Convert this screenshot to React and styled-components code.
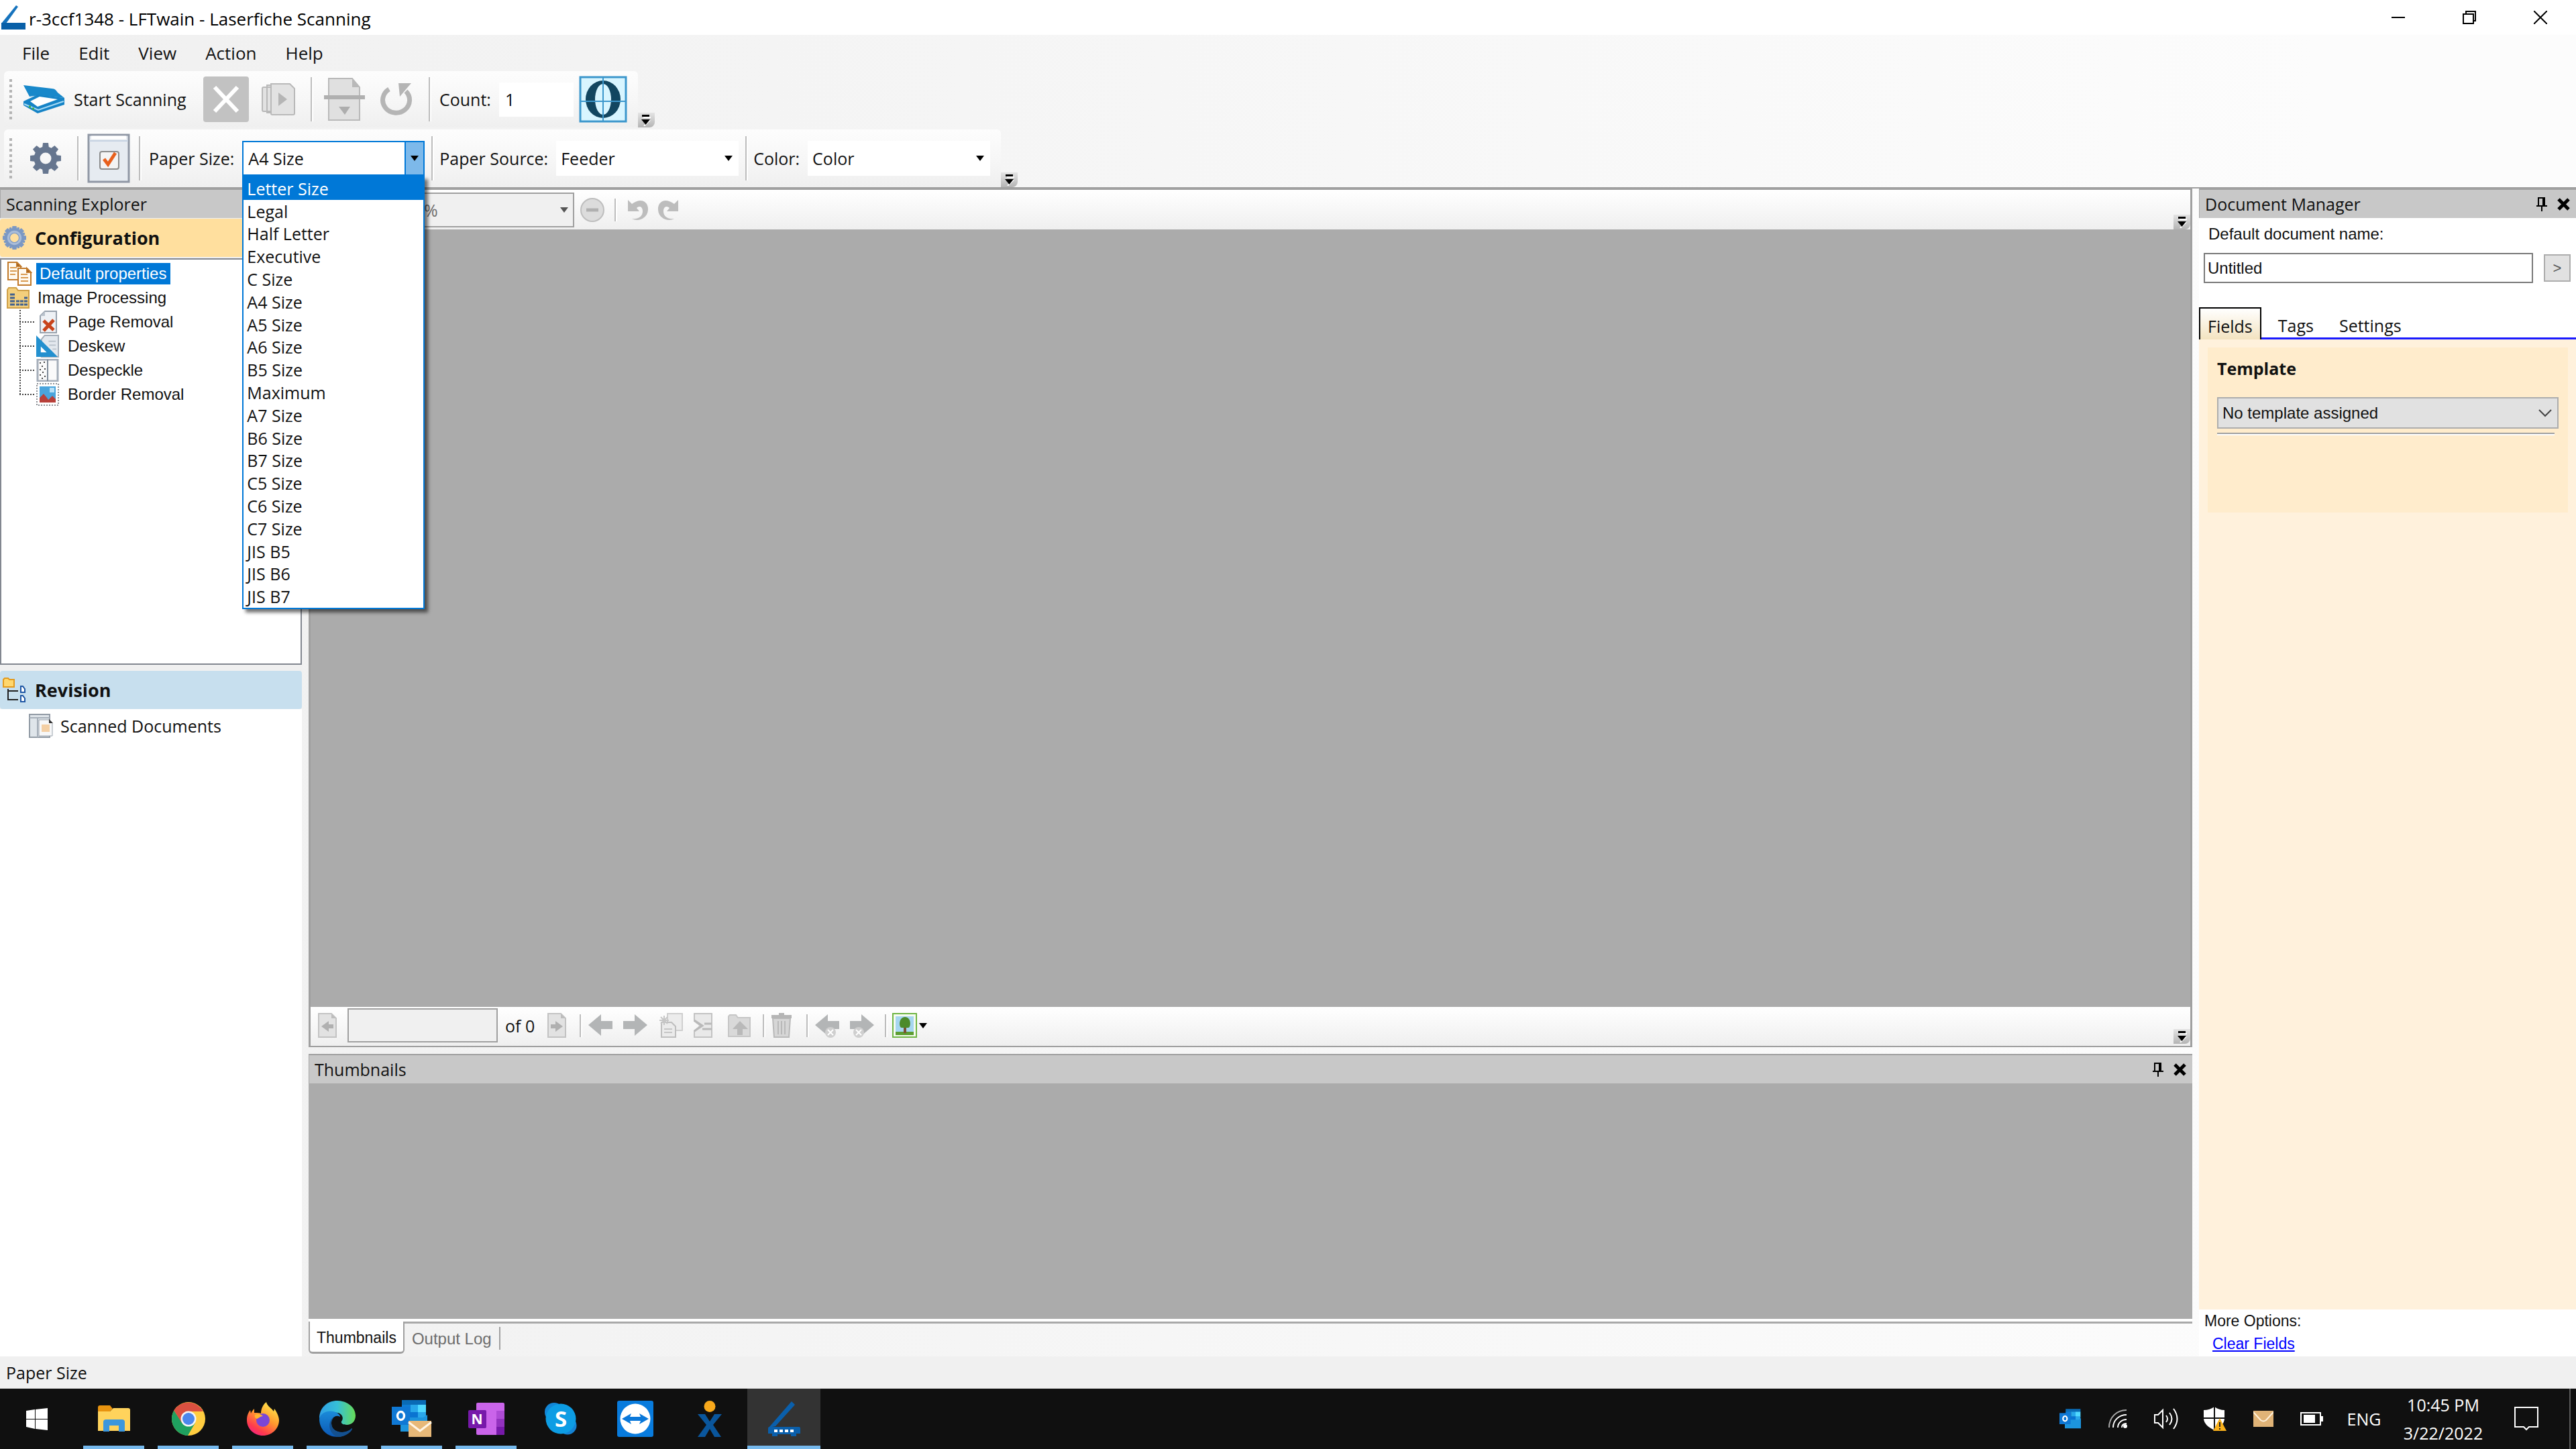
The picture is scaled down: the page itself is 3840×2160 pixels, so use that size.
import React, { useState } from 'react';
import styled, { createGlobalStyle, css } from 'styled-components';

const UI_FONT = '"Open Sans", "Noto Sans", sans-serif';
const CLASSIC_FONT = '"Liberation Sans", Arial, sans-serif';

const GlobalStyle = createGlobalStyle`
  *, *::before, *::after {
    box-sizing: border-box;
  }

  body {
    margin: 0;
    font-family: ${UI_FONT};
    font-size: 25px;
    line-height: 34px;
    color: #111;
  }

  button, input, select {
    margin: 0;
    padding: 0;
    border: none;
    border-radius: 0;
    background: none;
    color: inherit;
    font: inherit;
  }

  svg {
    display: block;
    flex: none;
  }

  ul {
    margin: 0;
    padding: 0;
    list-style: none;
  }
`;

const Window = styled.div`
  display: flex;
  flex-direction: column;
  height: 100vh;
  background: linear-gradient(90deg, #f0f0f0, #fcfcfc 90%);
`;

/* ---------- title bar and menu ---------- */

const TitleBar = styled.header`
  display: flex;
  align-items: center;
  height: 52px;
  padding-left: 2px;
  background: #fff;
  color: #000;
`;

const Title = styled.h1`
  flex: 1;
  margin: 0 0 0 5px;
  padding-top: 4px;
  font-size: 26px;
  font-weight: 400;
`;

const WindowButton = styled.button`
  display: flex;
  align-items: center;
  justify-content: center;
  width: 106px;
  height: 52px;
`;

const MenuBar = styled.nav`
  display: flex;
  align-items: center;
  height: 54px;
  padding-left: 12px;
`;

const MenuButton = styled.button`
  height: 46px;
  padding: 0 22px 0 21px;
  font-size: 26px;
`;

/* ---------- toolbars ---------- */

const ToolbarRow = styled.div`
  display: flex;
  margin: 0 0 3px 6px;
`;

const Toolbar = styled.div`
  display: flex;
  align-items: center;
  gap: 10px;
  height: 84px;
  padding: 0 18px 0 8px;
  border-radius: 6px 6px 0 0;
  background: linear-gradient(#fdfdfd, #f7f7f7 50%, #efefef);
`;

const SettingsToolbar = styled(Toolbar)`
  height: 86px;
  padding-right: 16px;
`;

const Docks = styled.div`
  border-bottom: 2px solid #a0a0a0;

  > :last-child {
    margin-bottom: 0;
  }
`;

const Grip = styled.span`
  width: 4px;
  height: 60px;
  margin-right: 6px;
  background: repeating-linear-gradient(#b4b4b4 0 4px, transparent 4px 8px);
`;

const Separator = styled.span`
  flex: none;
  width: 2px;
  height: ${props => props.$short ? '34px' : '66px'};
  margin: ${props => props.$margin || '0 4px'};
  background: #bdbdbd;
  box-shadow: 2px 0 0 #fff;
`;

const ToolButton = styled.button`
  display: flex;
  flex: none;
  align-items: center;
  justify-content: center;
  width: ${props => props.$width || '68px'};
  height: 68px;
`;

const StartButton = styled(ToolButton)`
  justify-content: flex-start;
  gap: 12px;
  width: 259px;
`;

const StopButton = styled(ToolButton)`
  border-radius: 4px;
  background: #c2c2c2;
`;

const CountLabel = styled.label`
  display: flex;
  align-items: center;
  gap: 12px;
`;

const CountInput = styled.input`
  width: 111px;
  height: 51px;
  padding-left: 9px;
  background: #fff;
`;

const Field = styled.div`
  position: relative;
  display: flex;
  align-items: center;
  gap: 12px;
`;

const Combo = styled.span`
  position: relative;
  display: flex;
  align-items: center;

  select {
    width: ${props => props.$width || '272px'};
    height: 52px;
    padding-left: 7px;
    appearance: none;
    background: #fff;
    opacity: 1;
    ${props => props.$active && css`
      border: 2px solid #0078d7;
      background: linear-gradient(90deg, transparent 240px, #0078d7 240px 242px, #7db9ea 242px), #fff;
    `}
    ${props => props.$disabled && css`
      border: 2px solid #a0a0a0;
      background: #f0f0f0;
      color: #6d6d6d;
    `}
  }

  svg {
    position: absolute;
    right: 9px;
    pointer-events: none;
  }
`;

const SizeList = styled.ul`
  position: absolute;
  z-index: 2;
  top: 100%;
  right: 0;
  display: flex;
  flex-direction: column;
  width: 272px;
  height: 646px;
  border: 2px solid #0078d7;
  background: #fff;
  box-shadow: 5px 5px 5px rgba(0, 0, 0, 0.55);
`;

const SizeOption = styled.li`
  display: flex;
  flex: 1;
  align-items: center;
  padding-left: 5px;
  line-height: 32px;
  ${props => props.$selected && css`
    background: #0078d7;
    color: #fff;
  `}
`;

const OverflowButton = styled.button`
  display: flex;
  align-items: center;
  align-self: flex-end;
  justify-content: center;
  width: 25px;
  height: 22px;
  margin-left: ${props => props.$push ? 'auto' : '0'};
  background: linear-gradient(#e4e4e4, #b4b4b4);
  border-radius: 0 0 8px 0;
`;

/* ---------- panels ---------- */

const Workspace = styled.main`
  display: grid;
  flex: 1;
  grid-template-columns: 450px minmax(0, 1fr) 562px;
  gap: 10px;
  min-height: 0;
`;

const Column = styled.section`
  display: flex;
  flex-direction: column;
  min-width: 0;
  min-height: 0;
`;

const WhiteColumn = styled(Column)`
  background: #fff;
`;

const PanelHeader = styled.div`
  display: flex;
  flex: none;
  align-items: center;
  gap: 15px;
  height: 44px;
  padding: 0 9px 0 8px;
  border-top: 2px solid #a0a0a0;
  border-left: 1px solid #a8a8a8;
  background: #c8c8c8;

  h2 {
    flex: 1;
    margin: 0;
    font-size: 25px;
    font-weight: 400;
  }
`;

const GroupHeader = styled.h3`
  display: flex;
  flex: none;
  align-items: center;
  gap: 13px;
  height: 57px;
  margin: 0;
  padding-left: 4px;
  border-radius: 4px;
  background: ${props => props.$color};
  font-size: 27px;
  font-weight: 700;
`;

const ConfigTree = styled.ul`
  height: 606px;
  margin: 2px 0 9px;
  padding: 3px 8px;
  border: 2px solid #828790;
  background: #fff;
  font-family: ${CLASSIC_FONT};
  font-size: 24px;
`;

const ExplorerGroup = styled.div`
  padding-top: 1px;
  background: #f0f0f0;
`;

const TreeItem = styled.li`
  display: flex;
  align-items: center;
  gap: 6px;
  height: 36px;
`;

const TreeLabel = styled.span`
  padding: 0 6px 0 5px;
  line-height: 32px;
  white-space: nowrap;
  ${props => props.$selected && css`
    background: #0078d7;
    color: #fff;
  `}
`;

const TreeBranch = styled.ul`
  margin-left: 19px;

  li {
    gap: 8px;
    background:
      repeating-linear-gradient(90deg, #444 0 2px, transparent 2px 4px) 0 50% / 24px 2px no-repeat,
      repeating-linear-gradient(#444 0 2px, transparent 2px 4px) 0 0 / 2px 100% no-repeat;
  }

  li:last-child {
    background-size: 24px 2px, 2px 50%;
  }

  svg {
    margin-left: 25px;
  }
`;

const RevisionItem = styled.div`
  display: flex;
  align-items: center;
  gap: 11px;
  height: 50px;
  padding-left: 43px;
`;

/* ---------- viewer ---------- */

const Viewer = styled.div`
  display: flex;
  flex: 1;
  flex-direction: column;
  min-height: 0;
  margin-bottom: 10px;
  border: solid #a0a0a0;
  border-width: 2px 3px;
  background: #f4f4f4;
`;

const ViewerBar = styled.div`
  display: flex;
  flex: none;
  align-items: center;
  gap: 9px;
  height: 59px;
  padding-left: 8px;
  background: linear-gradient(#fff, #efefef);
`;

const NavBar = styled(ViewerBar)`
  gap: 0;
  height: 58px;
  padding: 0 0 3px 11px;
`;

const Canvas = styled.div`
  flex: 1;
  min-height: 0;
  background: #ababab;
`;

const SmallButton = styled.button`
  display: flex;
  flex: none;
  align-items: center;
  justify-content: center;
  width: 36px;
  height: 40px;
`;

const NavButton = styled(SmallButton)`
  justify-content: flex-start;
  width: ${props => props.$width || '52px'};
`;

const PageInput = styled.input`
  width: 224px;
  height: 51px;
  padding: 0 8px;
  border: 2px solid #a0a0a0;
  background: #f0f0f0;
`;

const PageTotal = styled.span`
  width: 74px;
  padding-left: 11px;
`;

const ThumbnailPanel = styled.div`
  display: flex;
  flex-direction: column;
  height: 451px;
`;

const TabStrip = styled.div`
  display: flex;
  height: 56px;
  border-top: 4px solid #fff;
  font-family: ${CLASSIC_FONT};
  font-size: 23px;
`;

const StripTab = styled.button`
  height: 48px;
  padding: 0 11px;
  border-top: 3px solid #a9a9a9;
  color: #6d6d6d;
  font-size: 24px;
  ${props => props.$active && css`
    padding: 3px 10px 0;
    border: solid #a0a0a0;
    border-width: 0 2px 3px;
    border-radius: 0 0 6px 6px;
    background: #fff;
    color: #111;
    font-size: 23px;
  `}
`;

const StripRest = styled.span`
  flex: 1;
  border-top: 3px solid #a9a9a9;

  &::before {
    content: '';
    display: block;
    width: 2px;
    height: 34px;
    margin-top: 5px;
    background: #a0a0a0;
  }
`;

/* ---------- document manager ---------- */

const NameForm = styled.div`
  display: grid;
  flex: none;
  grid-template-columns: minmax(0, 1fr) 40px;
  align-items: center;
  column-gap: 16px;
  padding: 8px 8px 36px 7px;
  font-family: ${CLASSIC_FONT};
  font-size: 24px;

  label {
    grid-column: 1 / -1;
    margin-bottom: 12px;
    padding-left: 7px;
    line-height: 32px;
  }

  input {
    height: 45px;
    padding-left: 4px;
    border: 2px solid #7a7a7a;
    background: #fff;
  }

  button {
    height: 41px;
    border: 2px solid #adadad;
    background: #e1e1e1;
    color: #555;
    font-size: 22px;
  }
`;

const Tabs = styled.div`
  display: flex;
  flex: none;
  height: 48px;
  background: linear-gradient(transparent 45px, #1a1aff 45px);
`;

const Tab = styled.button`
  padding: 6px 19px 0;
  ${props => props.$active && css`
    margin-right: 6px;
    padding: 6px 11px 0;
    border: 2px solid #000;
    border-bottom: none;
    background: linear-gradient(#fff, #f3e3c0);
  `}
`;

const FieldsPane = styled.div`
  flex: 1;
  padding: 12px 12px 0 13px;
  background: #fff1dc;
`;

const TemplateCard = styled.div`
  height: 246px;
  padding: 14px;
  background: #ffeccc;

  h3 {
    margin: 0 0 26px;
    font-size: 25px;
    font-weight: 700;
  }
`;

const TemplateSelect = styled.span`
  position: relative;
  display: flex;
  align-items: center;
  margin-bottom: 6px;
  font-family: ${CLASSIC_FONT};
  font-size: 24px;

  select {
    width: 100%;
    height: 47px;
    padding-left: 6px;
    appearance: none;
    border: 2px solid #adadad;
    background: #e1e1e1;
  }

  svg {
    position: absolute;
    right: 10px;
    pointer-events: none;
  }
`;

const Rule = styled.hr`
  height: 4px;
  margin: 0 6px 0 0;
  border: none;
  border-top: 2px solid #a0a0a0;
  background: #fff;
`;

const MoreOptions = styled.div`
  flex: none;
  height: 70px;
  padding-left: 8px;
  font-family: ${CLASSIC_FONT};
  font-size: 23px;

  a {
    display: block;
    margin-left: 12px;
    color: #00f;
  }
`;

/* ---------- status bar and taskbar ---------- */

const StatusBar = styled.footer`
  display: flex;
  flex: none;
  align-items: center;
  height: 48px;
  padding-left: 9px;
  background: #f0f0f0;
`;

const Taskbar = styled.footer`
  display: flex;
  flex: none;
  height: 90px;
  background: #101010;
  color: #fff;
`;

const AppButton = styled.button`
  display: flex;
  align-items: center;
  justify-content: center;
  width: 109px;
  height: 90px;
  margin-right: 2px;
  background: ${props => props.$active ? '#333' : 'transparent'};
  ${props => (props.$running || props.$active) && css`
    background-image: linear-gradient(#76b9ed, #76b9ed);
    background-position: 50% 100%;
    background-repeat: no-repeat;
    background-size: ${props.$active ? '100%' : '91px'} 5px;
  `}

  &:first-child {
    margin-right: 6px;
  }
`;

const Tray = styled.div`
  display: flex;
  align-items: center;
  margin-left: auto;
`;

const TrayButton = styled.button`
  display: flex;
  align-items: center;
  justify-content: center;
  width: ${props => props.$width || '72px'};
  height: 90px;
`;

const Clock = styled.button`
  width: 140px;
  padding-left: 12px;
  line-height: 42px;
  text-align: center;
`;

const ShowDesktop = styled.button`
  width: 10px;
  margin-left: 4px;
  border-left: 2px solid #5a5a5a;
`;

/* ---------- icons ---------- */

const Caret = ({ color = '#000' }) => (
  <svg width="12" height="8" viewBox="0 0 12 8"><path d="M0 0h12L6 8z" fill={color} /></svg>
);

const OverflowIcon = () => (
  <svg width="14" height="17" viewBox="0 0 14 17">
    <path d="M3 4h11M4 17l9-9" stroke="#fff" strokeWidth="2" />
    <path d="M1 1.5h11" stroke="#000" strokeWidth="3" />
    <path d="M0 7h13l-6.500 8z" fill="#000" />
  </svg>
);

const PinIcon = () => (
  <svg width="16" height="22" viewBox="0 0 16 22" fill="none" stroke="#000" strokeWidth="2">
    <path d="M3 13V2h9v11M0 14h16M8 14v8" />
    <path d="M11 2v11" strokeWidth="4" />
  </svg>
);

const PanelCloseIcon = () => (
  <svg width="19" height="19" viewBox="0 0 19 19"><path d="M2 2l15 15M17 2L2 17" stroke="#000" strokeWidth="5" /></svg>
);

const LogoIcon = () => (
  <svg width="36" height="38" viewBox="0 0 36 38">
    <path d="M22 1l3 2L7 28H0z" fill="#1673bd" />
    <path d="M0 27h36v10H0z" fill="#0960a8" />
  </svg>
);

const ScannerIcon = () => (
  <svg width="64" height="44" viewBox="0 0 64 44">
    <path d="M1 1l42 5c5 0 7 3 9 6l10 8-38-4-14 2z" fill="#1888ca" />
    <path d="M1 25l21-10 40 5v10L22 43 1 31z" fill="#1583c6" />
    <path d="M11 25l14-7 27 4-30 11z" fill="#fff" />
    <path d="M2 29l21 9 38-13" fill="none" stroke="#a9dcf6" strokeWidth="2" />
    <path d="M9 33h3M14 36h3" stroke="#3fae4b" strokeWidth="3" />
  </svg>
);

const StopIcon = () => (
  <svg width="40" height="42" viewBox="0 0 40 42"><path d="M3 3l34 36M37 3L3 39" stroke="#fff" strokeWidth="6" /></svg>
);

const PagesIcon = () => (
  <svg width="50" height="48" viewBox="0 0 50 48" fill="#e2e2e2" stroke="#b9b9b9" strokeWidth="2">
    <path d="M13 6H3q-2 0-2 2v32q0 2 2 2h10M17 3H8v41h9" />
    <path d="M14 1h28l7 7v37q0 2-2 2H16q-2 0-2-2z" />
    <path d="M25 14v20l13-10z" fill="#b5b5b5" stroke="none" />
  </svg>
);

const SplitPageIcon = () => (
  <svg width="61" height="64" viewBox="0 0 61 64">
    <path d="M7 1h35l11 13v49H7z" fill="#e0e0e0" stroke="#b9b9b9" strokeWidth="2" />
    <path d="M42 1v13h11z" fill="#b9b9b9" />
    <path d="M0 26h61v6H0z" fill="#b0b0b0" />
    <path d="M22 43h17l-8 12z" fill="#adadad" />
  </svg>
);

const RotateIcon = () => (
  <svg width="48" height="50" viewBox="0 0 48 50">
    <path d="M13 10a20 19 0 1 0 25 3" fill="none" stroke="#b5b5b5" strokeWidth="7" />
    <path d="M27 1h19l-6 7-11 13z" fill="#b5b5b5" />
  </svg>
);

const ZeroIcon = () => (
  <svg width="72" height="70" viewBox="0 0 72 70">
    <rect x="2" y="2" width="68" height="66" fill="#d8f5ff" stroke="#3c97cc" strokeWidth="3" />
    <ellipse cx="36" cy="35" rx="26" ry="28" fill="#124660" />
    <ellipse cx="36" cy="35" rx="12" ry="23" fill="#d8f5ff" />
    <path d="M36 2v66M2 38h68" stroke="#3c97cc" strokeWidth="2" />
  </svg>
);

const teeth = [0, 45, 90, 135, 180, 225, 270, 315];

const Gear = ({ size, color, light }) => (
  <svg width={size} height={size} viewBox="0 0 46 46">
    {teeth.map(angle => (
      <path key={angle} d="M18 8L19 0h8l1 8z" fill={color} transform={`rotate(${angle} 23 23)`} />
    ))}
    {light && teeth.map(angle => (
      <path key={angle} d="M20 8l1-7h4l1 7z" fill={color} transform={`rotate(${angle + 22} 23 23)`} />
    ))}
    <circle cx="23" cy="23" r="13" fill="none" stroke={color} strokeWidth="9" />
    {light && <circle cx="23" cy="23" r="12" fill="none" stroke="#a9bcd8" strokeWidth="4" />}
  </svg>
);

const OptionsIcon = () => (
  <svg width="64" height="74" viewBox="0 0 64 74">
    <path d="M2 2h60v70H2z" fill="#e6ebf1" stroke="#9098a5" strokeWidth="3" />
    <path d="M3 11h58" stroke="#c5d2e2" strokeWidth="2" />
    <path d="M6 6h52" stroke="#fff" strokeWidth="5" />
    <rect x="19" y="27" width="28" height="26" rx="3" fill="#f4f4f4" stroke="#8b8b8b" strokeWidth="2" />
    <path d="M25 38l6 8 11-17" fill="none" stroke="#e8601c" strokeWidth="5" />
  </svg>
);

const PropertiesIcon = () => (
  <svg width="38" height="36" viewBox="0 0 38 36" fill="#fffaf0" stroke="#c17a2c" strokeWidth="2">
    <path d="M2 1h13l6 6v20H2z" />
    <path d="M5 9h10M5 14h10M5 19h8" stroke="#d99b50" />
    <path d="M17 10h13l6 6v19H17z" />
    <path d="M21 19h10M21 24h11M21 29h11" stroke="#d99b50" />
    <path d="M15 1v6h6zM30 10v6h6z" fill="#8b4a12" />
  </svg>
);

const ProcessingIcon = () => (
  <svg width="35" height="32" viewBox="0 0 35 32">
    <path d="M1 4l2-3h11l3 4h16v26H1z" fill="#f3cf7c" stroke="#cfa049" strokeWidth="2" />
    <path d="M5 11h7M5 16h7M5 21h7M5 26h7M14 21h5M14 26h5M20 21h5M20 26h5M26 16h5M26 21h5M26 26h5" stroke="#41618f" strokeWidth="3" />
  </svg>
);

const PageRemovalIcon = () => (
  <svg width="34" height="34" viewBox="0 0 34 34">
    <path d="M13 1h17v32H6V8z" fill="#eef1f5" stroke="#97a1ad" strokeWidth="2" />
    <path d="M13 1v7H6z" fill="#b9c2cc" />
    <path d="M11 15l15 14M26 14L11 30" stroke="#c8431b" strokeWidth="5" />
  </svg>
);

const DeskewIcon = () => (
  <svg width="34" height="34" viewBox="0 0 35 35">
    <path d="M13 1h21v33H8V7z" fill="#e3e8ee" stroke="#a5aeb9" strokeWidth="2" />
    <path d="M19 10h11M20 16h10M25 22h6" stroke="#bcc4cd" strokeWidth="2" />
    <path d="M0 1l33 33H0z" fill="#2390cf" />
    <path d="M7 18v9h9z" fill="#fff" />
  </svg>
);

const DespeckleIcon = () => (
  <svg width="34" height="34" viewBox="0 0 34 34">
    <path d="M2 1h30v32H2z" fill="#fafafa" stroke="#a5aeb9" strokeWidth="3" />
    <path d="M17 1v32" stroke="#7f8b99" strokeWidth="2" />
    <path d="M5 6h2M11 5h2M8 11h2M5 16h2M12 15h2M9 20h2M5 24h2M12 26h2M8 29h2" stroke="#444" strokeWidth="2" />
  </svg>
);

const BorderRemovalIcon = () => (
  <svg width="34" height="34" viewBox="0 0 34 34">
    <rect x="1" y="1" width="32" height="32" fill="none" stroke="#8b8f95" strokeWidth="2" strokeDasharray="2 2" />
    <path d="M5 5h24v24H5z" fill="#4aa5dd" />
    <path d="M20 7h7v7h-7z" fill="#b7e0f7" />
    <path d="M5 29v-7l6-6 5 6 2 3 6-6 5 5v5z" fill="#b8403a" />
  </svg>
);

const RevisionIcon = () => (
  <svg width="35" height="37" viewBox="0 0 35 37">
    <path d="M1 3l2-2h5l2 2h7v11H1z" fill="#ffd76d" stroke="#e39a1d" strokeWidth="2" />
    <path d="M8 17v16h15M8 20h15" fill="none" stroke="#222" strokeWidth="2" />
    <path d="M27 13h3l3 4v5h-6zM27 27h3l3 4v5h-6z" fill="#fff" stroke="#1d55a3" strokeWidth="2" />
  </svg>
);

const ScannedIcon = () => (
  <svg width="36" height="36" viewBox="0 0 36 36">
    <path d="M1 1h30v34H1z" fill="#dfe5ea" stroke="#929ba5" strokeWidth="2" />
    <path d="M1 6h30M13 6v29" stroke="#a7b0ba" strokeWidth="2" />
    <path d="M15 9h16l4 5v19H15z" fill="#f6f7f8" stroke="#9aa3ad" strokeWidth="1" />
    <path d="M30 8v6h6z" fill="#333" />
    <path d="M19 16h12v11H19z" fill="#f3cfa4" />
  </svg>
);

const MinusIcon = () => (
  <svg width="36" height="36" viewBox="0 0 36 36">
    <circle cx="18" cy="18" r="17" fill="#dcdcdc" stroke="#bebebe" strokeWidth="2" />
    <path d="M9 18h18" stroke="#b0b0b0" strokeWidth="5" />
  </svg>
);

const UndoIcon = () => (
  <svg width="32" height="32" viewBox="0 0 32 32">
    <path d="M1 1l6 6C22-4 32 5 31 16 30 29 16 34 7 29c9 1 16-3 16-11 0-7-5-9-9-5l4 5H1z" fill="#bdbdbd" />
  </svg>
);

const RedoIcon = () => (
  <svg width="32" height="32" viewBox="0 0 32 32">
    <path d="M31 1l-6 6C10-4 0 5 1 16c1 13 15 18 24 13-9 1-16-3-16-11 0-7 5-9 9-5l-4 5h17z" fill="#bdbdbd" />
  </svg>
);

const PageArrowIcon = ({ flip }) => (
  <svg width="28" height="37" viewBox="0 0 28 37">
    <path d="M1 1h19l7 7v28H1z" fill="#e2e2e2" stroke="#c3c3c3" strokeWidth="2" />
    <path d="M20 1v7h7z" fill="#bdbdbd" />
    <path d="M5 20l11-8v5h7v6h-7v5z" fill="#b0b0b0" transform={flip && 'matrix(-1 0 0 1 28 0)'} />
  </svg>
);

const ArrowIcon = ({ flip, badge }) => (
  <svg width="38" height="38" viewBox="0 0 38 38">
    <path d="M0 18L19 2v10h17v12H19v10z" fill="#b3b5b6" transform={flip && 'matrix(-1 0 0 1 36 0)'} />
    {badge && <circle cx={flip ? 13 : 23} cy="29" r="8" fill="#cfcfcf" />}
    {badge && <path d={flip ? 'M9 25l8 8M17 25l-8 8' : 'M19 25l8 8M27 25l-8 8'} stroke="#fff" strokeWidth="2" />}
  </svg>
);

const NewPageIcon = () => (
  <svg width="37" height="37" viewBox="0 0 37 37">
    <path d="M14 1h22v25H14z" fill="#ececec" stroke="#cfcfcf" strokeWidth="2" />
    <path d="M5 14h15l6 6v16H5z" fill="#ebebeb" stroke="#bebebe" strokeWidth="2" />
    <path d="M9 24h12M9 29h12" stroke="#c6c6c6" strokeWidth="2" />
    <path d="M9 4v14M2 11h14M4 6l10 10M14 6L4 16" stroke="#c6c6c6" strokeWidth="2" />
  </svg>
);

const CutPageIcon = () => (
  <svg width="30" height="37" viewBox="0 0 30 37">
    <path d="M2 1h26v35H2V27l9-8-9-7z" fill="#e9e9e9" stroke="#c3c3c3" strokeWidth="2" />
    <path d="M2 11l12 8L2 27M28 16H17M28 24H14" fill="none" stroke="#b9b9b9" strokeWidth="3" />
  </svg>
);

const UploadFolderIcon = () => (
  <svg width="35" height="37" viewBox="0 0 35 37">
    <path d="M1 5l2-2h9l3 4h18v28H1z" fill="#d9d9d9" stroke="#c6c6c6" strokeWidth="2" />
    <path d="M18 12l12 12h-8v9h-8v-9H7z" fill="#b9b9b9" />
  </svg>
);

const TrashIcon = () => (
  <svg width="30" height="37" viewBox="0 0 30 37">
    <path d="M2 8h26l-2 28H4z" fill="#d6d6d6" stroke="#b9b9b9" strokeWidth="2" />
    <path d="M0 3h30v5H0zM11 0h8v3h-8z" fill="#b5b5b5" />
    <path d="M10 12v20M15 12v20M20 12v20" stroke="#b9b9b9" strokeWidth="2" />
  </svg>
);

const TreeImageIcon = () => (
  <svg width="37" height="37" viewBox="0 0 37 37">
    <rect x="1" y="1" width="35" height="35" fill="#f5fbf0" stroke="#6fb544" strokeWidth="2" />
    <path d="M5 5h27v27H5z" fill="#a6d6f0" />
    <path d="M5 28h27v5H5z" fill="#5d9d32" />
    <path d="M17 20h4v10h-4z" fill="#7b5335" />
    <path d="M19 6c10 0 9 16 5 16H14C9 21 10 6 19 6z" fill="#4c8a2b" />
  </svg>
);

const ChevronIcon = () => (
  <svg width="20" height="13" viewBox="0 0 20 13"><path d="M1 2l9 9 9-9" fill="none" stroke="#444" strokeWidth="2" /></svg>
);

const WindowsIcon = () => (
  <svg width="32" height="33" viewBox="0 0 32 33">
    <path d="M0 4l13-2v14H0zM14 2l18-2v16H14zM0 17h13v14L0 28zM14 17h18v16l-18-2z" fill="#fff" />
  </svg>
);

const FolderAppIcon = () => (
  <svg width="48" height="42" viewBox="0 0 48 42">
    <path d="M0 4q0-3 3-3h15l4 5-4 4H0z" fill="#e8930f" />
    <path d="M0 10h18l5-5h22q3 0 3 3v31H0z" fill="#ffd35c" />
    <path d="M8 40V26q0-4 4-4h24q4 0 4 4v14h-9V31H17v9z" fill="#3c97dd" />
  </svg>
);

const ChromeIcon = () => (
  <svg width="50" height="50" viewBox="0 0 50 50">
    <circle cx="25" cy="25" r="25" fill="#ffcd40" />
    <path d="M25 25L3.350 12.500A25 25 0 0 1 46.650 14H25z" fill="#da5040" />
    <path d="M3.350 12.500A25 25 0 0 0 24 50l11-19-10-3-10 2z" fill="#1fa15f" />
    <path d="M25 14h21.650A25 25 0 0 0 3.350 12.500L15 31z" fill="#da5040" />
    <circle cx="25" cy="25" r="11.500" fill="#f4f4f4" />
    <circle cx="25" cy="25" r="9" fill="#4b87ec" />
  </svg>
);

const FirefoxIcon = () => (
  <svg width="48" height="50" viewBox="0 0 48 50">
    <defs>
      <linearGradient id="fox" x1="0.8" y1="0" x2="0.2" y2="1">
        <stop offset="0" stopColor="#fff04f" />
        <stop offset="0.45" stopColor="#ff9a2e" />
        <stop offset="0.8" stopColor="#ff3a4e" />
        <stop offset="1" stopColor="#f0208a" />
      </linearGradient>
    </defs>
    <path d="M29 0c1 6 8 9 11 14l1-4c5 7 7 13 7 17 0 13-11 23-24 23S0 40 0 27c0-7 2-11 5-15l1 5c1-3 3-5 5-7v6c5 0 8 0 10 1 0-7 3-13 8-17z" fill="url(#fox)" />
    <circle cx="24" cy="27" r="10" fill="#7a46d8" />
    <path d="M12 19c4-2 9-1 12 2-4 0-6 3-9 4-3-1-4-3-3-6z" fill="#ffb52e" />
  </svg>
);

const EdgeIcon = () => (
  <svg width="54" height="54" viewBox="0 0 54 54">
    <defs>
      <linearGradient id="edgeTop" x1="0" y1="0.4" x2="1" y2="0.4">
        <stop offset="0" stopColor="#2f9fe6" />
        <stop offset="0.5" stopColor="#36bfd6" />
        <stop offset="1" stopColor="#67dc56" />
      </linearGradient>
      <linearGradient id="edgeLow" x1="0" y1="0" x2="0" y2="1">
        <stop offset="0" stopColor="#1b8bd9" />
        <stop offset="1" stopColor="#0b58b5" />
      </linearGradient>
    </defs>
    <path d="M0 27C0 10 12 0 27 0s27 10 27 22c0 9-6 14-13 14-6 0-9-2-8-5 4-5 1-12-6-13C14 15 3 19 0 27z" fill="url(#edgeTop)" />
    <path d="M0 27c2-9 12-13 21-11 7 2 10 5 10 8-8-4-13 3-13 10 0 8 7 13 16 13 7 0 11-3 15-6-3 7-12 13-22 13C12 54 0 43 0 27z" fill="url(#edgeLow)" />
    <path d="M22 24c-6 6-5 15 1 20s18 4 26-3c1 3-8 13-22 13-13-5-16-22-5-30z" fill="#14508f" />
  </svg>
);

const OutlookIcon = ({ mail }) => (
  <svg width={mail ? 60 : 32} height={mail ? 56 : 30} viewBox={mail ? '0 0 60 56' : '0 0 52 48'}>
    <path d="M15 0h36v8H15z" fill="#0a6bb5" />
    <path d="M15 7h13v12H15z" fill="#0f7cd4" />
    <path d="M28 7h12v12H28z" fill="#28a8ea" />
    <path d="M39 7h12v12H39z" fill="#50d9ff" />
    <path d="M15 18h25v12H15z" fill="#0a74d1" />
    <path d="M39 18h12v12H39z" fill="#2aa7ea" />
    <path d="M13 26h34l6-4v25H13z" fill="#1c94dd" />
    <path d="M0 10h27v27H0z" fill="#0f78d4" />
    <ellipse cx="13.500" cy="23.500" rx="5" ry="6" fill="none" stroke="#fff" strokeWidth="3.500" />
    {mail && <path d="M25 31h34v24H25z" fill="#e7b878" />}
    {mail && <path d="M25 33l17 13 17-13" fill="none" stroke="#fff5e4" strokeWidth="3" />}
  </svg>
);

const OneNoteIcon = () => (
  <svg width="54" height="48" viewBox="0 0 54 48">
    <path d="M14 0h38q2 0 2 2v44q0 2-2 2H14q-2 0-2-2V2q0-2 2-2z" fill="#ca64ea" />
    <path d="M42 12h12v12H42z" fill="#ae4bd5" />
    <path d="M42 24h12v12H42z" fill="#9332bf" />
    <path d="M42 36h12v10q0 2-2 2H42z" fill="#7719aa" />
    <rect y="11" width="27" height="27" rx="2" fill="#7719aa" />
    <text x="13" y="32" textAnchor="middle" fill="#fff" fontFamily="Open Sans" fontWeight="700" fontSize="21">N</text>
  </svg>
);

const SkypeIcon = () => (
  <svg width="48" height="48" viewBox="0 0 48 48">
    <circle cx="14" cy="14" r="14" fill="#1286d6" />
    <circle cx="34" cy="34" r="13.500" fill="#1583d4" />
    <circle cx="24" cy="24" r="22.500" fill="#0d9de4" />
    <text x="24" y="36" textAnchor="middle" fill="#fff" fontFamily="Open Sans" fontWeight="700" fontSize="33">S</text>
  </svg>
);

const TeamViewerIcon = () => (
  <svg width="54" height="54" viewBox="0 0 54 54">
    <rect width="54" height="54" rx="3" fill="#087bdd" />
    <circle cx="27" cy="27" r="22.500" fill="#fff" />
    <path d="M7 27l14-8-2 5h16l-2-5 14 8-14 8 2-5H19l2 5z" fill="#0a78da" />
  </svg>
);

const PersonIcon = () => (
  <svg width="36" height="54" viewBox="0 0 36 54">
    <circle cx="18" cy="8.500" r="8.500" fill="#f7a81b" />
    <path d="M0 20h11l7 11 7-11h11L23 36l12 18H25l-7-12-7 12H0l13-18z" fill="#0a569c" />
  </svg>
);

const ScanAppIcon = () => (
  <svg width="48" height="52" viewBox="0 0 48 52">
    <path d="M35 0l5 5L11 37l-10 2z" fill="#0a5fab" />
    <path d="M0 40q0-2 2-2h44q2 0 2 2v8h-6v4h-8v-3H14v3H6v-4H0z" fill="#0a5fab" />
    <path d="M9 44h5M17 44h5M25 44h5M33 44h5" stroke="#fff" strokeWidth="4" />
  </svg>
);

const WifiIcon = () => (
  <svg width="30" height="28" viewBox="0 0 30 28" fill="none" stroke="#fff" strokeWidth="2">
    <path d="M1 27C1 12 12 1 27 1" stroke="#aaa" />
    <path d="M7 27C7 16 16 8 27 8M14 27c0-7 6-12 13-12" />
    <path d="M20 27c0-4 3-6 7-6" />
    <circle cx="25" cy="25" r="3" fill="#fff" stroke="none" />
  </svg>
);

const SpeakerIcon = () => (
  <svg width="38" height="34" viewBox="0 0 38 34" fill="none" stroke="#fff" strokeWidth="2">
    <path d="M1 11h5l7-7v26l-7-7H1z" />
    <path d="M18 12q4 5 0 10M23 8q7 9 0 18M29 2q11 15 0 30" />
  </svg>
);

const ShieldIcon = () => (
  <svg width="34" height="36" viewBox="0 0 34 36">
    <path d="M16 0c4 3 9 5 15 5v12c0 9-7 14-15 18C8 31 0 26 0 17V5c6 0 12-2 16-5z" fill="#fff" />
    <path d="M16 0v34M0 17h31" stroke="#101010" strokeWidth="2" />
    <path d="M24 17l10 19H14z" fill="#f8b01b" />
    <path d="M24 23v7M24 32v2" stroke="#222" strokeWidth="2" />
  </svg>
);

const MailIcon = () => (
  <svg width="30" height="24" viewBox="0 0 30 24">
    <path d="M0 0h30v24H0z" fill="#e0b377" />
    <path d="M0 2l11 12q4 3 8 0L30 2" fill="none" stroke="#fff1da" strokeWidth="2" />
  </svg>
);

const BatteryIcon = () => (
  <svg width="34" height="20" viewBox="0 0 34 20">
    <path d="M1 1h29v18H1z" fill="none" stroke="#fff" strokeWidth="2" />
    <path d="M5 4h17v12H5zM31 6h3v8h-3z" fill="#fff" />
  </svg>
);

const ActionCenterIcon = () => (
  <svg width="36" height="36" viewBox="0 0 36 36"><path d="M1 1h34v29H22l-4 4-4-4H1z" fill="none" stroke="#fff" strokeWidth="2" /></svg>
);

/* ---------- data ---------- */

const menus = ['File', 'Edit', 'View', 'Action', 'Help'];

const paperSizes = [
  'Letter Size', 'Legal', 'Half Letter', 'Executive', 'C Size', 'A4 Size', 'A5 Size',
  'A6 Size', 'B5 Size', 'Maximum', 'A7 Size', 'B6 Size', 'B7 Size', 'C5 Size', 'C6 Size',
  'C7 Size', 'JIS B5', 'JIS B6', 'JIS B7',
];

const processingSteps = [
  { name: 'Page Removal', Icon: PageRemovalIcon },
  { name: 'Deskew', Icon: DeskewIcon },
  { name: 'Despeckle', Icon: DespeckleIcon },
  { name: 'Border Removal', Icon: BorderRemovalIcon },
];

const apps = [
  { name: 'Start', icon: <WindowsIcon /> },
  { name: 'File Explorer', icon: <FolderAppIcon />, running: true },
  { name: 'Chrome', icon: <ChromeIcon />, running: true },
  { name: 'Firefox', icon: <FirefoxIcon />, running: true },
  { name: 'Edge', icon: <EdgeIcon />, running: true },
  { name: 'Outlook', icon: <OutlookIcon mail />, running: true },
  { name: 'OneNote', icon: <OneNoteIcon />, running: true },
  { name: 'Skype', icon: <SkypeIcon /> },
  { name: 'TeamViewer', icon: <TeamViewerIcon /> },
  { name: 'Assistant', icon: <PersonIcon /> },
  { name: 'Laserfiche Scanning', icon: <ScanAppIcon />, active: true },
];

const PanelActions = () => (
  <>
    <button aria-label="Pin"><PinIcon /></button>
    <button aria-label="Close panel"><PanelCloseIcon /></button>
  </>
);

const App = () => {
  const [paperSize, setPaperSize] = useState('A4 Size');
  const [hovered, setHovered] = useState('Letter Size');
  const [listOpen, setListOpen] = useState(true);
  const [docName, setDocName] = useState('Untitled');
  const [count, setCount] = useState('1');

  const toggleList = event => {
    event.preventDefault();
    setListOpen(open => !open);
  };

  const pickSize = size => {
    setPaperSize(size);
    setListOpen(false);
  };

  return (
    <Window>
      <GlobalStyle />
      <TitleBar>
        <LogoIcon />
        <Title>r-3ccf1348 - LFTwain - Laserfiche Scanning</Title>
        <WindowButton aria-label="Minimize">
          <svg width="20" height="20"><path d="M0 10h20" stroke="#000" strokeWidth="2" /></svg>
        </WindowButton>
        <WindowButton aria-label="Restore">
          <svg width="20" height="20" fill="none" stroke="#000" strokeWidth="2">
            <path d="M1 5h15v14H1zM5 5V1h14v14h-3" />
          </svg>
        </WindowButton>
        <WindowButton aria-label="Close">
          <svg width="20" height="20"><path d="M0 0l20 20M20 0L0 20" stroke="#000" strokeWidth="2" /></svg>
        </WindowButton>
      </TitleBar>

      <MenuBar>
        {menus.map(menu => <MenuButton key={menu}>{menu}</MenuButton>)}
      </MenuBar>

      <Docks>
        <ToolbarRow>
          <Toolbar>
            <Grip />
            <StartButton><ScannerIcon />Start Scanning</StartButton>
            <StopButton aria-label="Stop"><StopIcon /></StopButton>
            <ToolButton aria-label="Continue"><PagesIcon /></ToolButton>
            <Separator />
            <ToolButton aria-label="New document"><SplitPageIcon /></ToolButton>
            <ToolButton aria-label="Rescan"><RotateIcon /></ToolButton>
            <Separator />
            <CountLabel>
              Count:
              <CountInput value={count} onChange={e => setCount(e.target.value)} />
            </CountLabel>
            <ToolButton aria-label="Reset count"><ZeroIcon /></ToolButton>
          </Toolbar>
          <OverflowButton aria-label="More tools"><OverflowIcon /></OverflowButton>
        </ToolbarRow>
        <ToolbarRow>
          <SettingsToolbar>
            <Grip />
            <ToolButton aria-label="Scanner settings"><Gear size={46} color="#66768f" /></ToolButton>
            <Separator $margin="0 3px" />
            <ToolButton $width="64px" aria-label="Options"><OptionsIcon /></ToolButton>
            <Separator $margin="0 3px" />
            <Field>
              <label htmlFor="paper-size">Paper Size:</label>
              <Combo $active>
                <select id="paper-size" value={paperSize} onMouseDown={toggleList} onChange={e => setPaperSize(e.target.value)}>
                  {paperSizes.map(size => <option key={size}>{size}</option>)}
                </select>
                <Caret />
              </Combo>
              {listOpen && (
                <SizeList role="listbox" aria-label="Paper sizes">
                  {paperSizes.map(size => (
                    <SizeOption
                      key={size}
                      role="option"
                      aria-selected={size === paperSize}
                      $selected={size === hovered}
                      onMouseEnter={() => setHovered(size)}
                      onClick={() => pickSize(size)}
                    >
                      {size}
                    </SizeOption>
                  ))}
                </SizeList>
              )}
            </Field>
            <Separator $margin="0" />
            <Field>
              <label htmlFor="paper-source">Paper Source:</label>
              <Combo>
                <select id="paper-source"><option>Feeder</option></select>
                <Caret />
              </Combo>
            </Field>
            <Separator $margin="0" />
            <Field>
              <label htmlFor="color">Color:</label>
              <Combo>
                <select id="color"><option>Color</option></select>
                <Caret />
              </Combo>
            </Field>
          </SettingsToolbar>
          <OverflowButton aria-label="More options"><OverflowIcon /></OverflowButton>
        </ToolbarRow>
      </Docks>

      <Workspace>
        <WhiteColumn>
          <PanelHeader><h2>Scanning Explorer</h2></PanelHeader>
          <ExplorerGroup>
            <GroupHeader $color="#ffdf9e"><Gear size={35} color="#7b98c4" light />Configuration</GroupHeader>
            <ConfigTree>
              <TreeItem><PropertiesIcon /><TreeLabel $selected>Default properties</TreeLabel></TreeItem>
              <TreeItem><ProcessingIcon /><TreeLabel>Image Processing</TreeLabel></TreeItem>
              <li>
                <TreeBranch>
                  {processingSteps.map(({ name, Icon }) => (
                    <TreeItem key={name}><Icon /><TreeLabel>{name}</TreeLabel></TreeItem>
                  ))}
                </TreeBranch>
              </li>
            </ConfigTree>
            <GroupHeader $color="#c7dfee"><RevisionIcon />Revision</GroupHeader>
          </ExplorerGroup>
          <RevisionItem><ScannedIcon />Scanned Documents</RevisionItem>
        </WhiteColumn>

        <Column>
          <Viewer>
            <ViewerBar>
              <Grip />
              <SmallButton aria-label="Zoom in" />
              <SmallButton aria-label="Zoom out" />
              <Combo $width="276px" $disabled>
                <select aria-label="Zoom" disabled><option>100%</option></select>
                <Caret color="#555" />
              </Combo>
              <SmallButton aria-label="Decrease"><MinusIcon /></SmallButton>
              <Separator $short $margin="0 6px" />
              <SmallButton aria-label="Undo"><UndoIcon /></SmallButton>
              <SmallButton $wide aria-label="Redo"><RedoIcon /></SmallButton>
              <OverflowButton $push aria-label="More view tools"><OverflowIcon /></OverflowButton>
            </ViewerBar>
            <Canvas />
            <NavBar>
              <NavButton $width="44px" aria-label="Previous page"><PageArrowIcon /></NavButton>
              <PageInput aria-label="Page" />
              <PageTotal>of 0</PageTotal>
              <NavButton $width="48px" aria-label="Next page"><PageArrowIcon flip /></NavButton>
              <Separator $short $margin="0 11px 0 0" />
              <NavButton aria-label="Move left"><ArrowIcon /></NavButton>
              <NavButton aria-label="Move right"><ArrowIcon flip /></NavButton>
              <NavButton aria-label="Insert page"><NewPageIcon /></NavButton>
              <NavButton aria-label="Split document"><CutPageIcon /></NavButton>
              <NavButton aria-label="Export"><UploadFolderIcon /></NavButton>
              <Separator $short $margin="0 11px 0 0" />
              <NavButton aria-label="Delete"><TrashIcon /></NavButton>
              <Separator $short $margin="0 11px 0 0" />
              <NavButton aria-label="Previous error"><ArrowIcon badge /></NavButton>
              <NavButton aria-label="Next error"><ArrowIcon flip badge /></NavButton>
              <Separator $short $margin="0 9px 0 0" />
              <NavButton $width="40px" aria-label="Image view"><TreeImageIcon /></NavButton>
              <Caret />
              <OverflowButton $push aria-label="More page tools"><OverflowIcon /></OverflowButton>
            </NavBar>
          </Viewer>
          <ThumbnailPanel>
            <PanelHeader><h2>Thumbnails</h2><PanelActions /></PanelHeader>
            <Canvas />
            <TabStrip>
              <StripTab $active>Thumbnails</StripTab>
              <StripTab>Output Log</StripTab>
              <StripRest />
            </TabStrip>
          </ThumbnailPanel>
        </Column>

        <WhiteColumn>
          <PanelHeader><h2>Document Manager</h2><PanelActions /></PanelHeader>
          <NameForm>
            <label htmlFor="doc-name">Default document name:</label>
            <input id="doc-name" value={docName} onChange={e => setDocName(e.target.value)} />
            <button aria-label="Insert token">&gt;</button>
          </NameForm>
          <Tabs>
            <Tab $active>Fields</Tab>
            <Tab>Tags</Tab>
            <Tab>Settings</Tab>
          </Tabs>
          <FieldsPane>
            <TemplateCard>
              <h3>Template</h3>
              <TemplateSelect>
                <select aria-label="Template"><option>No template assigned</option></select>
                <ChevronIcon />
              </TemplateSelect>
              <Rule />
            </TemplateCard>
          </FieldsPane>
          <MoreOptions>
            More Options:
            <a href="#clear">Clear Fields</a>
          </MoreOptions>
        </WhiteColumn>
      </Workspace>

      <StatusBar>Paper Size</StatusBar>

      <Taskbar>
        {apps.map(app => (
          <AppButton key={app.name} aria-label={app.name} $running={app.running} $active={app.active}>
            {app.icon}
          </AppButton>
        ))}
        <Tray>
          <TrayButton aria-label="Outlook"><OutlookIcon /></TrayButton>
          <TrayButton aria-label="Network"><WifiIcon /></TrayButton>
          <TrayButton aria-label="Volume"><SpeakerIcon /></TrayButton>
          <TrayButton aria-label="Security"><ShieldIcon /></TrayButton>
          <TrayButton aria-label="Mail"><MailIcon /></TrayButton>
          <TrayButton aria-label="Battery"><BatteryIcon /></TrayButton>
          <TrayButton $width="84px">ENG</TrayButton>
          <Clock>10:45 PM<br />3/22/2022</Clock>
          <TrayButton $width="120px" aria-label="Notifications"><ActionCenterIcon /></TrayButton>
        </Tray>
        <ShowDesktop aria-label="Show desktop" />
      </Taskbar>
    </Window>
  );
};

export default App;
